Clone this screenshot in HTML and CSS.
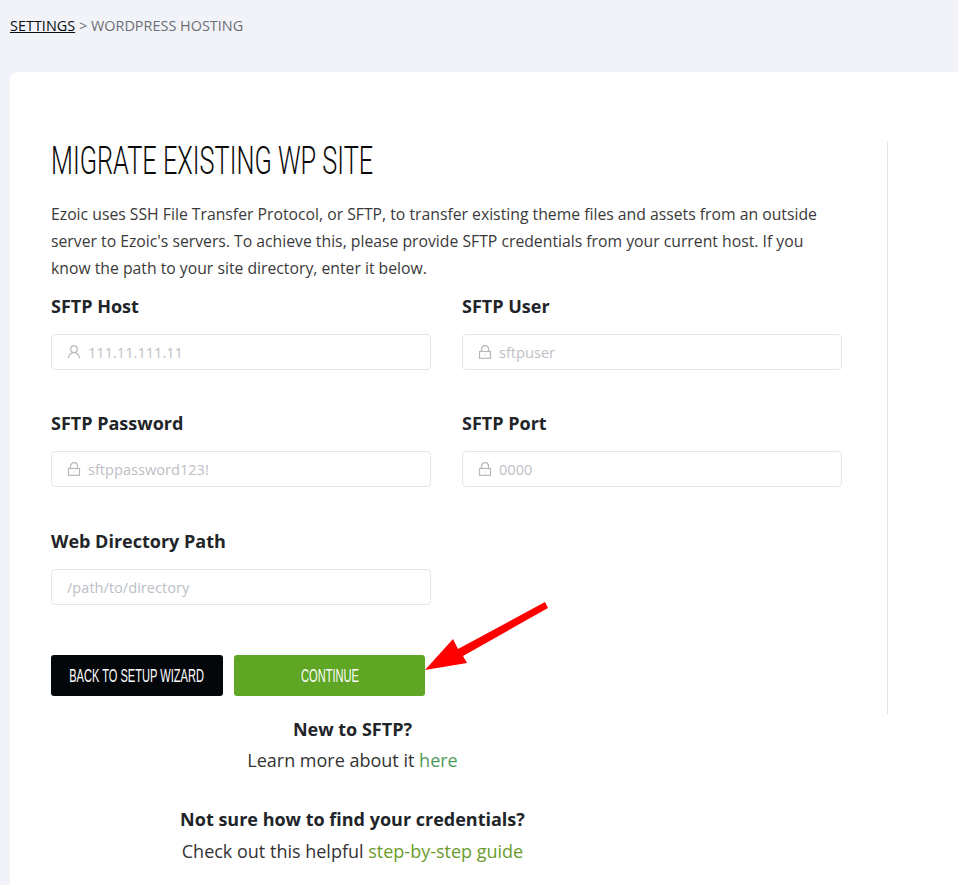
FILE: index.html
```html
<!DOCTYPE html>
<html lang="en">

<head>
    <title>Migrate Existing WP Site</title>
    <meta charset="UTF-8">
    <link rel="stylesheet" href="styles.css">
</head>

<body>
    <div class="breadcrumb"><a href="#">SETTINGS</a> &gt; WORDPRESS HOSTING</div>

    <div class="card">
        <div class="card-main">
            <h1><span>MIGRATE EXISTING WP SITE</span></h1>
            <p class="intro">Ezoic uses SSH File Transfer Protocol, or SFTP, to transfer existing theme files and assets from an outside server to Ezoic's servers. To achieve this, please provide SFTP credentials from your current host. If you know the path to your site directory, enter it below.</p>

            <div class="form-grid">
                <div class="field">
                    <label>SFTP Host</label>
                    <div class="input-box">
                        <svg class="icon" viewBox="0 0 14 14"><circle cx="7" cy="4.200" r="3.300" /><path d="M1.500 13.200c.4-3.200 2.300-5.500 5.500-5.500s5.100 2.300 5.500 5.500" /></svg>
                        <span>111.11.111.11</span>
                    </div>
                </div>
                <div class="field">
                    <label>SFTP User</label>
                    <div class="input-box">
                        <svg class="icon" viewBox="0 0 14 14"><rect x="1.500" y="6.500" width="11" height="6.800" /><path d="M3.500 6.500V4.200a3.500 3.500 0 0 1 7 0v2.300M7 9.400v1" /></svg>
                        <span>sftpuser</span>
                    </div>
                </div>
                <div class="field">
                    <label>SFTP Password</label>
                    <div class="input-box">
                        <svg class="icon" viewBox="0 0 14 14"><rect x="1.500" y="6.500" width="11" height="6.800" /><path d="M3.500 6.500V4.200a3.500 3.500 0 0 1 7 0v2.300M7 9.400v1" /></svg>
                        <span>sftppassword123!</span>
                    </div>
                </div>
                <div class="field">
                    <label>SFTP Port</label>
                    <div class="input-box">
                        <svg class="icon" viewBox="0 0 14 14"><rect x="1.500" y="6.500" width="11" height="6.800" /><path d="M3.500 6.500V4.200a3.500 3.500 0 0 1 7 0v2.300M7 9.400v1" /></svg>
                        <span>0000</span>
                    </div>
                </div>
                <div class="field">
                    <label>Web Directory Path</label>
                    <div class="input-box">
                        <span>/path/to/directory</span>
                    </div>
                </div>
            </div>

            <div class="button-row">
                <button class="btn btn-dark"><span>BACK TO SETUP WIZARD</span></button>
                <button class="btn btn-green"><span>CONTINUE</span></button>
                <svg class="arrow" viewBox="0 0 130 70"><path d="M1 69 L29 38 L34 48 L121 1 L124 7 L39 55 L43 62 Z" /></svg>
            </div>

            <div class="help">
                <div class="help-block">
                    <p class="help-title">New to SFTP?</p>
                    <p>Learn more about it <a class="link-teal" href="#">here</a></p>
                </div>
                <div class="help-block second">
                    <p class="help-title">Not sure how to find your credentials?</p>
                    <p>Check out this helpful <a class="link-olive" href="#">step-by-step guide</a></p>
                </div>
            </div>
        </div>
    </div>
</body>

</html>
```

FILE: styles.css
```css
html,
body {
    height: 885px;
    overflow: hidden;
}

body {
    background-color: #f2f3f8;
    font-family: "Open Sans", Arial, sans-serif;
    color: #212529;
    margin: 0;
}

.breadcrumb {
    padding: 16px 10px 0;
    height: 72px;
    box-sizing: border-box;
    font-size: 14.450px;
    line-height: 20px;
    color: #6c6f75;
}

.breadcrumb a {
    color: #0a0c10;
}

.card {
    background-color: #fff;
    border-radius: 8px 0 0 0;
    margin-left: 10px;
    padding: 69px 70px 60px 41px;
    height: 813px;
    box-sizing: border-box;
}

.card-main {
    width: 836px;
    height: 573px;
    border-right: 1px solid #e1e4ec;
}

/* no condensed font here, so the heading and buttons get squeezed */
h1 {
    font-family: Roboto, "Liberation Sans", sans-serif;
    font-weight: 300;
    font-size: 38px;
    line-height: 40px;
    color: #0a0a0a;
    margin: 0;
    white-space: nowrap;
}

h1 span {
    display: inline-block;
    transform: scaleX(0.666);
    transform-origin: left center;
}

.intro {
    width: 785px;
    font-size: 15.750px;
    line-height: 27px;
    color: #3a3a3a;
    margin: 20px 0 0;
}

.form-grid {
    display: grid;
    grid-template-columns: 380px 380px;
    column-gap: 31px;
    row-gap: 40.300px;
    margin-top: 11px;
    width: 791px;
}

.field label {
    display: block;
    font-size: 18px;
    font-weight: 700;
    line-height: 27.400px;
    color: #212529;
    margin-bottom: 13.600px;
}

.input-box {
    display: flex;
    align-items: center;
    gap: 7px;
    height: 36px;
    box-sizing: border-box;
    border: 1px solid #e3e6ee;
    border-radius: 4px;
    padding-left: 15px;
    font-size: 14.600px;
    color: #bcbfc6;
}

.icon {
    width: 14px;
    height: 14px;
    fill: none;
    stroke: #b8b8b8;
    stroke-width: 1.200;
}

.button-row {
    position: relative;
    display: flex;
    gap: 11px;
    margin-top: 50px;
}

.btn {
    display: flex;
    align-items: center;
    justify-content: center;
    height: 41px;
    border: none;
    border-radius: 3px;
    color: #fff;
    font-family: "Liberation Sans", sans-serif;
    font-size: 18px;
    padding: 3px 0 0;
    white-space: nowrap;
}

.btn span {
    flex-shrink: 0;
    transform: scaleX(0.615);
}

.btn-dark {
    width: 172px;
    background-color: #030709;
}

.btn-green {
    width: 191px;
    background-color: #5fa624;
}

.arrow {
    position: absolute;
    left: 373px;
    top: -54px;
    width: 130px;
    height: 70px;
    fill: #fe0000;
}

.help {
    width: 603px;
    margin-top: 18px;
    text-align: center;
    font-size: 18px;
    color: #333;
}

.help p {
    margin: 0;
}

.help-block {
    line-height: 31px;
}

.help-block.second {
    line-height: 32px;
    margin-top: 27px;
}

.help .help-title {
    font-weight: 700;
    color: #212529;
}

.link-teal {
    color: #4d9a59;
    text-decoration: none;
}

.link-olive {
    color: #6b9c2e;
    text-decoration: none;
}
```
